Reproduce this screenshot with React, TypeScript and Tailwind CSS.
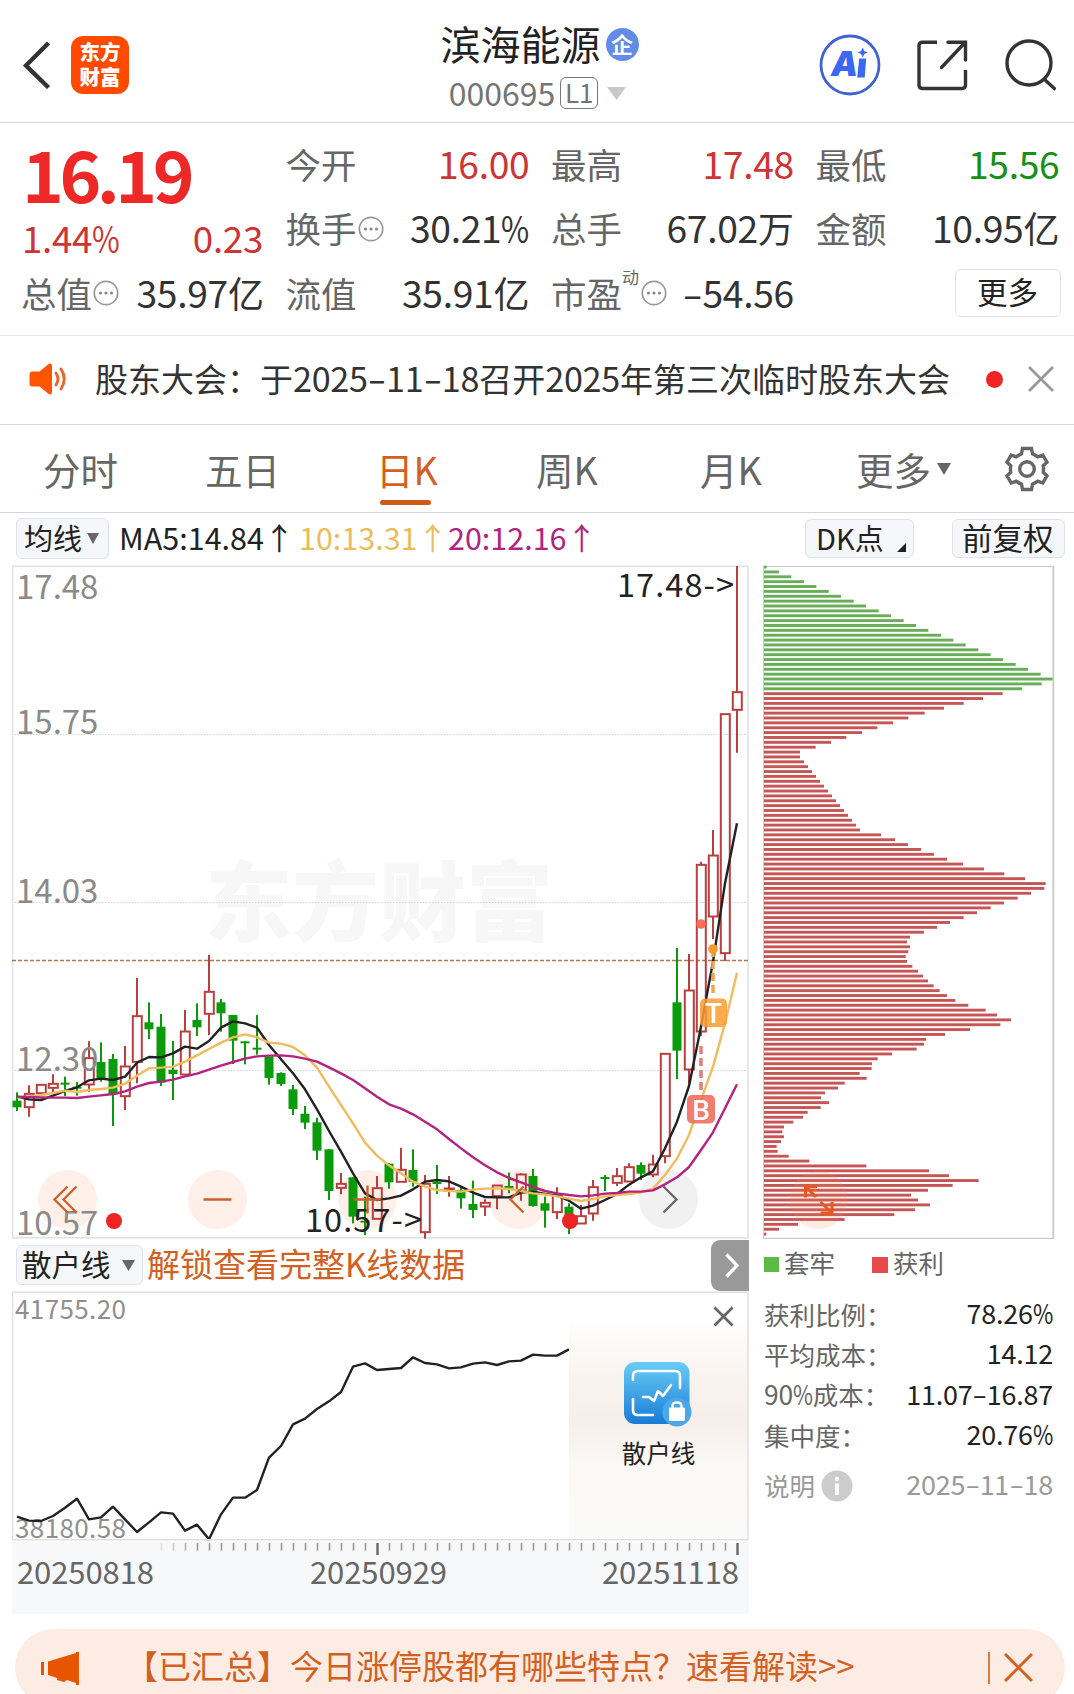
import type { ReactNode } from "react";

// Candles: [kind, high, body top, body bottom, low] in thirds of a pixel, measured from y = 930
type Candle = ["r" | "g", number, number, number, number];

const candles: Candle[] = [
  ["g", 487, 512, 532, 543], ["r", 466, 490, 533, 560], ["r", 463, 463, 491, 491], ["r", 433, 460, 475, 487],
  ["g", 440, 458, 464, 498], ["g", 456, 470, 476, 497], ["r", 334, 383, 465, 485], ["g", 337, 396, 445, 455],
  ["g", 372, 387, 494, 588], ["r", 348, 408, 500, 540], ["r", 144, 257, 397, 460], ["g", 217, 277, 298, 327],
  ["g", 252, 290, 458, 468], ["g", 333, 419, 432, 510], ["r", 240, 303, 435, 435], ["g", 220, 270, 292, 318],
  ["r", 74, 184, 253, 316], ["g", 207, 217, 250, 305], ["g", 255, 255, 332, 402], ["g", 334, 334, 340, 403],
  ["g", 255, 353, 359, 374], ["g", 380, 380, 444, 464], ["g", 427, 429, 462, 468], ["g", 465, 478, 537, 555],
  ["g", 528, 551, 578, 597], ["g", 563, 577, 662, 690], ["g", 658, 658, 783, 810], ["r", 729, 760, 775, 793],
  ["g", 742, 742, 860, 880], ["g", 800, 872, 878, 915], ["r", 738, 773, 868, 868], ["g", 699, 701, 757, 776],
  ["r", 653, 718, 757, 757], ["g", 658, 720, 755, 770], ["r", 735, 760, 908, 926], ["g", 705, 755, 762, 792],
  ["r", 738, 774, 778, 800], ["g", 768, 780, 805, 836], ["g", 752, 822, 840, 864], ["r", 808, 817, 831, 858],
  ["r", 765, 765, 800, 838], ["g", 728, 768, 776, 790], ["r", 730, 732, 783, 812], ["g", 717, 738, 828, 830],
  ["g", 800, 820, 842, 893], ["r", 772, 795, 848, 867], ["g", 820, 830, 868, 912], ["r", 825, 857, 882, 882],
  ["r", 750, 770, 852, 872], ["g", 735, 741, 747, 783], ["r", 714, 737, 760, 768], ["r", 700, 710, 756, 756],
  ["g", 697, 705, 731, 750], ["r", 674, 702, 735, 742], ["r", 370, 370, 680, 700], ["g", 54, 217, 362, 447],
  ["r", 72, 180, 420, 460], ["r", -205, -197, 306, 318], ["r", -300, -225, -39, 27], ["r", -649, -649, 71, 93],
  ["r", -1092, -715, -659, -532],
];

const ma5 = [
  500, 508, 510, 497, 483, 472, 451, 446, 450, 440, 398, 381, 382, 370, 350, 356, 333, 293, 274, 280, 293, 345, 388,
  430, 478, 538, 603, 665, 730, 790, 810, 805, 797, 778, 755, 750, 754, 770, 788, 801, 802, 802, 788, 785, 792, 797,
  812, 836, 827, 810, 792, 764, 742, 724, 655, 575, 468, 290, 95, -140, -320,
];
const ma10 = [
  502, 500, 495, 489, 482, 486, 480, 477, 473, 461, 437, 415, 413, 410, 395, 376, 357, 338, 322, 313, 322, 338, 341,
  351, 376, 413, 470, 525, 580, 638, 677, 706, 730, 755, 770, 780, 783, 785, 779, 776, 775, 777, 783, 790, 793, 799,
  806, 813, 807, 799, 795, 792, 787, 776, 735, 685, 615, 510, 410, 280, 128,
];
const ma20 = [
  500, 501, 502, 503, 503, 504, 500, 496, 492, 484, 470, 459, 455, 449, 439, 431, 419, 407, 396, 386, 379, 377, 376,
  379, 386, 395, 412, 430, 450, 475, 500, 523, 536, 553, 575, 598, 627, 655, 682, 706, 727, 744, 757, 771, 783, 790,
  795, 799, 796, 791, 789, 785, 785, 781, 763, 742, 711, 660, 607, 535, 463,
];
const retail = [
  830, 842, 843, 828, 803, 776, 838, 832, 800, 838, 876, 847, 817, 821, 872, 854, 898, 823, 773, 773, 750, 653, 618,
  553, 536, 507, 484, 456, 380, 370, 390, 387, 384, 352, 369, 373, 385, 382, 371, 367, 375, 364, 362, 344, 347, 347,
  328,
];

// Chip distribution bar ends, top to bottom; the first 26 are the trapped (green) ones
const chips = [
  35, 72, 109, 147, 184, 221, 258, 296, 333, 371, 408, 446, 483, 520, 558, 595, 632, 670, 707, 744, 782, 819, 857, 895,
  860, 801, 743, 684, 626, 567, 509, 460, 414, 367, 321, 274, 228, 182, 135, 135, 147, 159, 171, 183, 195, 207, 219,
  231, 243, 255, 267, 279, 291, 303, 315, 378, 420, 459, 498, 537, 576, 624, 687, 748, 810, 872, 868, 828, 788, 747,
  707, 666, 626, 585, 546, 507, 465, 456, 465, 460, 452, 456, 472, 489, 504, 519, 536, 554, 576, 601, 640, 692, 726,
  768, 736, 645, 570, 513, 507, 485, 411, 368, 351, 350, 314, 335, 269, 249, 210, 198, 222, 197, 158, 144, 115, 87, 82,
  87, 78, 65, 68, 101, 163, 334, 522, 582, 671, 593, 519, 468, 489, 525, 480, 418, 269, 129, 72, 34,
];

const cx = (i: number) => 17 + i * 12;
const line = (values: number[], base: number) => values.map((v, i) => `${cx(i)},${base + v / 3}`).join(" ");

// Latin digits run slightly larger than the Han characters beside them,
// with a condensed percent sign and a wide hyphen
function Mix({ children }: { children: string }) {
  return (
    <>
      {children.split(/([\x21-\x7e]+)/).map((part, i) =>
        i % 2 ? (
          <span key={i} className="text-[1.035em] tracking-[-0.008em]">
            {part.split(/([%-])/).map((s, j) => {
              if (s === "%") {
                return (
                  <span key={j} className="-mr-[0.16em] inline-block origin-left scale-x-[0.82]">
                    %
                  </span>
                );
              }
              if (s === "-") {
                return (
                  <span key={j} className="mx-[0.1em] inline-block scale-x-[1.6]">
                    -
                  </span>
                );
              }
              return s;
            })}
          </span>
        ) : (
          part
        ),
      )}
    </>
  );
}

function Ring() {
  return (
    <svg className="mt-[2px] ml-px size-[26px] shrink-0" viewBox="0 0 26 26" fill="none">
      <circle cx="13" cy="13" r="11.7" stroke="#999" strokeWidth="1.7" />
      <circle cx="7.5" cy="13" r="1.6" fill="#888" />
      <circle cx="13" cy="13" r="1.6" fill="#888" />
      <circle cx="18.5" cy="13" r="1.6" fill="#888" />
    </svg>
  );
}

function Stat({ label, value, color = "text-[#333]" }: { label: ReactNode; value: string; color?: string }) {
  return (
    <div className="flex h-[64.5px] items-center justify-between leading-none whitespace-nowrap">
      <span className="-ml-px flex items-center text-[35.5px] text-[#666]">{label}</span>
      <span className={`-mr-px text-[36px] ${color}`}>
        <Mix>{value}</Mix>
      </span>
    </div>
  );
}

function Header() {
  return (
    <header className="grid h-[123px] shrink-0 grid-cols-[1fr_auto_1fr] items-center border-b border-[#d5d5d5] pl-[23px] pr-[18px]">
      <div className="flex items-center pt-[8px]">
        <svg className="h-[48px] w-[28px]" viewBox="0 0 28 48" fill="none" stroke="#333" strokeWidth="4.4">
          <path d="M25.500 2 3 24.500 25.500 46.500" />
        </svg>
        <div className="ml-[20px] flex h-[58px] w-[58px] flex-col items-center justify-center rounded-[12px] bg-[#ff4a00] pb-[3px] text-[20.500px] leading-[25px] font-black text-white">
          <span>东方</span>
          <span>财富</span>
        </div>
      </div>
      <div className="flex flex-col items-center pt-[8px]">
        <div className="flex items-center">
          <h1 className="text-[40px] leading-[46px] text-[#222]">滨海能源</h1>
          <span className="ml-[5px] mt-[2px] flex size-[33px] items-center justify-center rounded-full bg-[#638ce6] pb-[2px] text-[22px] leading-none font-bold text-white">
            企
          </span>
        </div>
        <div className="mt-[8px] flex items-center pr-[4px]">
          <span className="text-[32px] leading-[36px] text-[#757575]">000695</span>
          <span className="ml-[5px] mt-[2px] flex h-[32px] w-[38px] items-center justify-center rounded-[6px] border-[1.5px] border-[#777] pb-[3px] text-[26px] leading-none text-[#757575]">
            L1
          </span>
          <svg className="ml-[9px] mt-[2px] h-[13px] w-[19px]" viewBox="0 0 19 13">
            <path d="M0 0H19L9.500 13z" fill="#c8c8c8" />
          </svg>
        </div>
      </div>
      <div className="flex items-center justify-end pt-[8px]">
        <svg className="size-[62px]" viewBox="0 0 62 62" fill="none">
          <circle cx="31" cy="31" r="29" stroke="#3f63d2" strokeWidth="2.8" />
          <text x="12" y="42" fontFamily="Inter" fontWeight="900" fontStyle="italic" fontSize="34" fill="#3a68f4">
            A
          </text>
          <path d="M40.200 24.500h7l-1.500 19h-7.500z" fill="#3a68f4" />
          <path d="M43.700 13.500l1.600 3.500 3.400 1.500-3.400 1.600-1.600 3.400-1.600-3.400-3.400-1.600 3.400-1.500z" fill="#3a68f4" />
        </svg>
        <svg className="ml-[35px] size-[52px]" viewBox="0 0 52 52" fill="none" stroke="#333" strokeWidth="3.4">
          <path d="M21 3.200H6.500q-3.500 0-3.500 3.500V46q0 3.500 3.500 3.500H46q3.500 0 3.500-3.500V31" />
          <path d="M32 3.200H49.500V21M49 3.500 25.500 28.500" strokeLinecap="round" />
        </svg>
        <svg className="ml-[36px] size-[52px]" viewBox="0 0 52 52" fill="none" stroke="#333" strokeWidth="3.4">
          <circle cx="25" cy="24" r="22" />
          <path d="M40 40 51.500 50.500" />
        </svg>
      </div>
    </header>
  );
}

function Quote() {
  return (
    <section className="grid h-[213px] shrink-0 grid-cols-[241px_242px_241px_242px] gap-x-[23.500px] border-b border-[#e6e6e6] pl-[22px] pt-[8px]">
      <div className="flex flex-col">
        <div className="h-[76px] pt-[3px] text-[71px] leading-[76px] font-bold tracking-[-4.5px] text-[#ee2727]">16.19</div>
        <div className="flex h-[53px] items-center justify-between pt-[8px] text-[35.500px] leading-none text-[#cf3434]">
          <span>
            <Mix>1.44%</Mix>
          </span>
          <span>
            <Mix>0.23</Mix>
          </span>
        </div>
        <Stat label={<>总值<Ring /></>} value="35.97亿" />
      </div>
      <div>
        <Stat label="今开" value="16.00" color="text-[#cf3434]" />
        <Stat label={<>换手<Ring /></>} value="30.21%" />
        <Stat label="流值" value="35.91亿" />
      </div>
      <div>
        <Stat label="最高" value="17.48" color="text-[#cf3434]" />
        <Stat label="总手" value="67.02万" />
        <Stat
          label={
            <>
              市盈
              <span className="mb-[32px] w-[18px] text-[17px]">动</span>
              <Ring />
            </>
          }
          value="-54.56"
        />
      </div>
      <div>
        <Stat label="最低" value="15.56" color="text-[#169016]" />
        <Stat label="金额" value="10.95亿" />
        <div className="flex h-[64.5px] items-center justify-end pt-[2px]">
          <button className="-mr-[2px] h-[48px] w-[106px] rounded-[6px] border-[1.5px] border-[#e2e2e2] pb-[4px] text-[30.500px] leading-none text-[#222]">
            更多
          </button>
        </div>
      </div>
    </section>
  );
}

function Notice() {
  return (
    <section className="flex h-[89px] shrink-0 items-center border-b border-[#d8d8d8] pb-[2px] pl-[29px]">
      <svg className="h-[32px] w-[40px]" viewBox="0 0 40 32" fill="none">
        <path d="M3.500 8.500h7L19 1.500q4-2.500 4 2v25q0 4.500-4 2L10.500 23.500h-7q-3 0-3-3v-9q0-3 3-3z" fill="#ff5500" />
        <path d="M27 10q4 6 0 12M32 6q6.500 10 0 20" stroke="#e8692f" strokeWidth="3" strokeLinecap="round" />
      </svg>
      <p className="-mt-[4px] ml-[26px] w-[862px] text-[33px] leading-none whitespace-nowrap text-[#333]">
        <Mix>股东大会：于2025-11-18召开2025年第三次临时股东大会</Mix>
      </p>
      <span className="ml-[29px] size-[17px] rounded-full bg-[#f02424]" />
      <svg className="ml-[25px] size-[26px]" viewBox="0 0 26 26" stroke="#999" strokeWidth="2.8">
        <path d="M1 1 25 25M25 1 1 25" />
      </svg>
    </section>
  );
}

function Gear() {
  return (
    <svg className="size-[46px]" viewBox="-23 -23 46 46" fill="none" stroke="#666" strokeWidth="3.4">
      <circle r="7.300" />
      <path d="M-4.500-20.500H4.500L5.500-15.200Q8.500-14 10.800-12.200L15.800-14 20-6.800 16.300-3.300Q16.800 0 16.300 3.300L20 6.800 15.800 14 10.800 12.200Q8.500 14 5.500 15.200L4.500 20.500H-4.500L-5.500 15.200Q-8.500 14-10.800 12.200L-15.800 14-20 6.800-16.300 3.300Q-16.800 0-16.300-3.300L-20-6.800-15.800-14-10.800-12.200Q-8.500-14-5.500-15.200Z" />
    </svg>
  );
}

function Tabs() {
  return (
    <nav className="flex h-[88px] shrink-0 items-center border-b border-[#d5d5d5] pl-[43px] text-[37.500px] leading-none whitespace-nowrap text-[#666]">
      <span className="w-[162px]">分时</span>
      <span className="w-[171px]">五日</span>
      <span className="relative w-[160px] text-[#d45f20]">
        日K
        <i className="absolute -bottom-[18px] left-[4px] h-[5px] w-[51px] rounded-full bg-[#d05c1c]" />
      </span>
      <span className="w-[164px]">周K</span>
      <span className="w-[156px]">月K</span>
      <span className="w-[81px]">更多</span>
      <svg className="h-[12px] w-[14px]" viewBox="0 0 14 12">
        <path d="M0 0H14L7 12z" fill="#666" />
      </svg>
      <div className="ml-[53px]">
        <Gear />
      </div>
    </nav>
  );
}

function Toolbar() {
  return (
    <div className="flex h-[53px] shrink-0 items-start pl-[16px] pt-[5px] text-[29px] leading-none whitespace-nowrap text-[#222]">
      <div className="flex h-[41px] w-[93px] items-center rounded-[6px] border border-[#dfe2e6] bg-[#f5f7fa] pb-[3px] pl-[7px]">
        均线
        <svg className="ml-[5px] mt-[3px] h-[11px] w-[12px]" viewBox="0 0 12 11">
          <path d="M0 0H12L6 11z" fill="#666" />
        </svg>
      </div>
      <span className="ml-[10px] w-[180px] pt-[4px] text-[30.500px]">MA5:14.84↑</span>
      <span className="w-[149px] pt-[4px] text-[30.500px] text-[#ebbd5a]">10:13.31↑</span>
      <span className="pt-[4px] text-[30.500px] text-[#b0267f]">20:12.16↑</span>
      <div className="ml-auto mt-px flex h-[39px] w-[109px] items-center rounded-[6px] border border-[#dfe2e6] bg-[#f5f7fa] pb-[3px] pl-[10px]">
        DK点
        <svg className="ml-[13px] mt-[20px] size-[9px]" viewBox="0 0 9 9">
          <path d="M9 0V9H0z" fill="#222" />
        </svg>
      </div>
      <div className="ml-[38px] mr-[9px] mt-px flex h-[39px] w-[113px] items-center rounded-[6px] border border-[#dfe2e6] bg-[#f5f7fa] pb-[3px] pl-[9px] text-[30.500px]">
        前复权
      </div>
    </div>
  );
}

function KLine() {
  return (
    <svg className="block h-[674px] w-[738px]" viewBox="12 565 738 674" fill="none">
      <text x="205" y="935" fontSize="87" fontWeight="900" fill="#f7f7f7">
        东方财富
      </text>
      <g fill="#fef0e8">
        <circle cx="67.500" cy="1199.500" r="29.500" />
        <circle cx="217.500" cy="1199.500" r="29.500" />
        <circle cx="367.500" cy="1199.500" r="29.500" />
        <circle cx="518.500" cy="1199.500" r="29.500" />
        <circle cx="668.500" cy="1199.500" r="29.500" fill="#f1f1f1" />
      </g>
      <path d="M12 734.500H748M12 902.500H748M12 1070.500H748" stroke="#d4d4d4" strokeDasharray="1.5 1.5" />
      <rect x="12.500" y="566.250" width="735.500" height="671.500" stroke="#e0e0e0" strokeWidth="1.500" />
      <g fontSize="33" fill="#8a8a8a">
        <text x="16" y="599">17.48</text>
        <text x="16" y="734">15.75</text>
        <text x="16" y="903">14.03</text>
        <text x="16" y="1235">10.57</text>
      </g>
      <path d="M12 960.500H748" stroke="#b07a50" strokeWidth="1.300" strokeDasharray="4 2" />

      {candles.map(([kind, hi, top, bottom, lo], i) => {
        const x = cx(i);
        const y = (v: number) => 930 + v / 3;
        if (kind === "g") {
          return (
            <g key={i} fill="#0a9b0a">
              <rect x={x - 1} y={y(hi)} width="2" height={(lo - hi) / 3} />
              <rect x={x - 4.5} y={y(top)} width="9" height={Math.max(2, (bottom - top) / 3)} />
            </g>
          );
        }
        return (
          <g key={i} stroke="#bb3e3e" strokeWidth="2">
            <path d={`M${x} ${y(hi)}V${y(top)}M${x} ${y(bottom)}V${y(lo)}`} />
            <rect x={x - 4.2} y={y(top) + 0.5} width="9" height={Math.max(0.5, (bottom - top) / 3 - 1)} />
          </g>
        );
      })}
      <text x="16" y="1071" fontSize="33" fill="#8a8a8a">
        12.30
      </text>

      <g strokeWidth="2.400" strokeLinejoin="round">
        <polyline points={line(ma5, 930)} stroke="#222" />
        <polyline points={line(ma10, 930)} stroke="#efbd5c" />
        <polyline points={line(ma20, 930)} stroke="#b4237f" />
      </g>

      <g fontSize="32.500" fill="#222">
        <text x="617" y="597" textLength="117">
          17.48-&gt;
        </text>
        <text x="305" y="1232" textLength="117">
          10.57-&gt;
        </text>
      </g>

      <g stroke="#c8622a" strokeWidth="2.300">
        <path d="M67.500 1186.500 54.500 1199.500 67.500 1212.500M76.500 1186.500 63.500 1199.500 76.500 1212.500" />
        <path d="M203.500 1199.500H231.500M353.500 1199.500H381.500M367.500 1185.500V1213.500" />
        <path d="M523.500 1186.500 510.500 1199.500 523.500 1212.500" />
        <path d="M663.500 1186.500 676.500 1199.500 663.500 1212.500" stroke="#666" />
      </g>
      <circle cx="114" cy="1221" r="8" fill="#ee2424" />
      <circle cx="570" cy="1221" r="8" fill="#ee2424" />

      <path d="M713 949V993" stroke="#f3a04c" strokeWidth="3.500" strokeDasharray="8 4" />
      <path d="M701 1046V1090" stroke="#e27f78" strokeWidth="3.500" strokeDasharray="8 4" />
      <circle cx="701" cy="924" r="4.800" fill="#f86f5c" />
      <circle cx="713" cy="949" r="4.800" fill="#fa9a2c" />
      <rect x="700" y="998.500" width="27" height="28.500" rx="5" fill="#fd9c2f" fillOpacity=".85" />
      <rect x="687" y="1095" width="28" height="28.500" rx="5" fill="#f06f5e" fillOpacity=".9" />
      <g fontFamily="Roboto" fontSize="28" fontWeight="500" fill="#fff" textAnchor="middle">
        <text x="713.500" y="1022.500">T</text>
        <text x="701.200" y="1119.500">B</text>
      </g>
    </svg>
  );
}

function RetailBar() {
  return (
    <div className="flex h-[52px] w-[737px] items-center pl-[4px]">
      <div className="flex h-[40px] w-[127px] items-center rounded-[6px] border border-[#dfe2e6] bg-[#f5f7fa] pb-[3px] pl-[5px] text-[29.500px] leading-none text-[#222]">
        散户线
        <svg className="ml-[11px] mt-[3px] h-[11px] w-[13px]" viewBox="0 0 13 11">
          <path d="M0 0H13L6.500 11z" fill="#666" />
        </svg>
      </div>
      <span className="ml-[4px] pb-[4px] text-[33px] leading-none text-[#d2601f]">解锁查看完整K线数据</span>
      <div className="ml-auto flex h-[51px] w-[38px] items-center justify-center rounded-l-[9px] bg-[#999]">
        <svg className="ml-[3px] h-[25px] w-[14px]" viewBox="0 0 14 25" fill="none" stroke="#fff" strokeWidth="3.400">
          <path d="M1.500 1.500 12 12.500 1.500 23.500" />
        </svg>
      </div>
    </div>
  );
}

function RetailChart() {
  return (
    <svg className="block h-[323px] w-[738px]" viewBox="12 1291 738 323" fill="none">
      <defs>
        <linearGradient id="veil" x1="0" y1="0" x2="0" y2="1">
          <stop offset="0.100" stopColor="#fff" />
          <stop offset="0.350" stopColor="#f9f3ef" />
          <stop offset="0.520" stopColor="#f6eeea" />
          <stop offset="0.700" stopColor="#faf9f6" />
          <stop offset="1" stopColor="#fafafa" />
        </linearGradient>
        <linearGradient id="tile" x1="0" y1="0" x2="0" y2="1">
          <stop offset="0" stopColor="#68cdf6" />
          <stop offset="1" stopColor="#1a7bd6" />
        </linearGradient>
      </defs>
      <g fontSize="26" fill="#8f8f8f">
        <text x="15" y="1319" textLength="111">
          41755.20
        </text>
        <text x="15" y="1538" textLength="111">
          38180.58
        </text>
      </g>
      <polyline points={line(retail, 1240)} stroke="#222" strokeWidth="2.400" strokeLinejoin="round" />
      <rect x="569" y="1293" width="179" height="246" fill="url(#veil)" />
      <rect x="12.500" y="1292.250" width="735.500" height="247.500" stroke="#e0e0e0" strokeWidth="1.500" />
      <path d="M714.500 1307.500 732.500 1325.500M732.500 1307.500 714.500 1325.500" stroke="#666" strokeWidth="2.800" />

      <rect x="624" y="1362" width="65.500" height="62" rx="11" fill="url(#tile)" />
      <g stroke="#fff" strokeWidth="2.600" strokeLinecap="round" strokeLinejoin="round">
        <path d="M633 1380V1376Q633 1371 638 1371H675Q680 1371 680 1376V1388" />
        <path d="M633 1399V1410Q633 1415 638 1415H653" />
        <path d="M643 1397H649L654 1401 658 1391 663 1396 671 1385" />
      </g>
      <circle cx="677" cy="1412" r="14.500" fill="#4aa7ec" />
      <path d="M672.500 1408V1406Q672.500 1402.500 677 1402.500T681.500 1406V1408" stroke="#fff" strokeWidth="2.400" />
      <rect x="669" y="1407.500" width="16" height="13.500" rx="1.500" fill="#fff" />
      <text x="658.500" y="1463" fontSize="24.500" fill="#222" textAnchor="middle">
        散户线
      </text>

      <rect x="12" y="1542" width="737" height="72" fill="#f7f8fa" />
      {Array.from({ length: 49 }, (_, k) => k + 12).map((i) => {
        const major = i === 30 || i === 60;
        return (
          <path
            key={i}
            d={`M${cx(i) + 0.5} 1543V${major ? 1555 : 1550.5}`}
            stroke={major ? "#666" : "#999"}
            strokeWidth={major ? 2.4 : 1.6}
            opacity={Math.min(1, (i - 11) / 4)}
          />
        );
      })}
      <g fontSize="31" fill="#666">
        <text x="17" y="1584" textLength="137">
          20250818
        </text>
        <text x="310" y="1584" textLength="137">
          20250929
        </text>
        <text x="602" y="1584" textLength="137">
          20251118
        </text>
      </g>
    </svg>
  );
}

function ChipChart() {
  return (
    <svg className="block h-[674px] w-[292px]" viewBox="763 565 292 674" fill="none">
      <path d="M763.700 1238.500V566.500H1053.500" stroke="#c9c9c9" strokeWidth="1.200" />
      {chips.map((end, i) => (
        <rect
          key={i}
          x="764"
          y={565.6 + i * 4.869}
          width={(end - 27) / 3}
          height="2.900"
          fill={i < 26 ? "#68ae59" : "#c65656"}
        />
      ))}
      <path d="M763 1238.300H1054" stroke="#c9c9c9" strokeWidth="1.200" />
      <path d="M1053.300 566V1239" stroke="#c9c9c9" strokeWidth="1.800" />
      <circle cx="818.500" cy="1200" r="29" fill="#f58a55" fillOpacity=".16" />
      <path
        d="M805.500 1197.500V1186.700H817M806 1187 816 1197M832 1202V1213H820.500M831.500 1212.500 820.500 1202"
        stroke="#e8581c"
        strokeWidth="3"
      />
    </svg>
  );
}

function ChipStats() {
  const rows = [
    ["获利比例：", "78.26%"],
    ["平均成本：", "14.12"],
    ["90%成本：", "11.07-16.87"],
    ["集中度：", "20.76%"],
  ];
  return (
    <div className="w-[290px] pl-px text-[25.500px] leading-none text-[#666]">
      <div className="flex h-[50px] items-center pt-px">
        <i className="size-[15px] bg-[#5bb946]" />
        <span className="ml-[5px] w-[88px] pb-[6px]">套牢</span>
        <i className="size-[16px] bg-[#e54b4b]" />
        <span className="ml-[5px] pb-[6px]">获利</span>
      </div>
      <div className="mt-[4px]">
        {rows.map(([name, value]) => (
          <div key={name} className="flex h-[40.500px] items-center justify-between">
            <span>
              <Mix>{name}</Mix>
            </span>
            <span className="text-[26px] text-[#222]">
              <Mix>{value}</Mix>
            </span>
          </div>
        ))}
      </div>
      <div className="flex h-[57px] items-center pt-[5px] text-[#999]">
        <span className="pb-[3px]">说明</span>
        <svg className="ml-[6px] size-[32px]" viewBox="0 0 32 32">
          <circle cx="16" cy="16" r="15.500" fill="#ccc" />
          <circle cx="16" cy="9" r="2.300" fill="#fff" />
          <path d="M16 13.500V25" stroke="#fff" strokeWidth="4" />
        </svg>
        <span className="ml-auto pb-[3px] text-[26px]">
          <Mix>2025-11-18</Mix>
        </span>
      </div>
    </div>
  );
}

function Banner() {
  return (
    <div className="ml-[15px] mt-[14px] flex h-[77px] w-[1050px] shrink-0 items-center rounded-full bg-[#fcece3] pl-[26px] text-[#d2601f]">
      <svg className="h-[34px] w-[38px]" viewBox="0 0 38 34" fill="#e85500">
        <path d="M0 11H3V24H0zM7 10.500 35 2V32L26 29 23 31 16 29V27L7 24zM35 1H38V34H35z" />
      </svg>
      <p className="ml-[46px] w-[738px] pb-[4px] text-[33px] leading-none whitespace-nowrap">
        【已汇总】今日涨停股都有哪些特点？速看解读&gt;&gt;
      </p>
      <i className="ml-[125px] h-[32px] w-[1.500px] bg-[#d9783f]" />
      <svg className="ml-[14px] size-[29px]" viewBox="0 0 29 29" stroke="#d2601f" strokeWidth="3">
        <path d="M1 1 28 28M28 1 1 28" />
      </svg>
    </div>
  );
}

export default function App() {
  return (
    <main className="flex h-[1694px] w-[1074px] flex-col overflow-hidden bg-white font-['Noto_Sans_CJK_SC',sans-serif]">
      <Header />
      <Quote />
      <Notice />
      <Tabs />
      <Toolbar />
      <div className="-mt-px flex h-[1050px] shrink-0">
        <div className="ml-[12px] w-[738px] shrink-0">
          <KLine />
          <RetailBar />
          <RetailChart />
        </div>
        <div className="ml-[13px]">
          <ChipChart />
          <ChipStats />
        </div>
      </div>
      <Banner />
    </main>
  );
}
